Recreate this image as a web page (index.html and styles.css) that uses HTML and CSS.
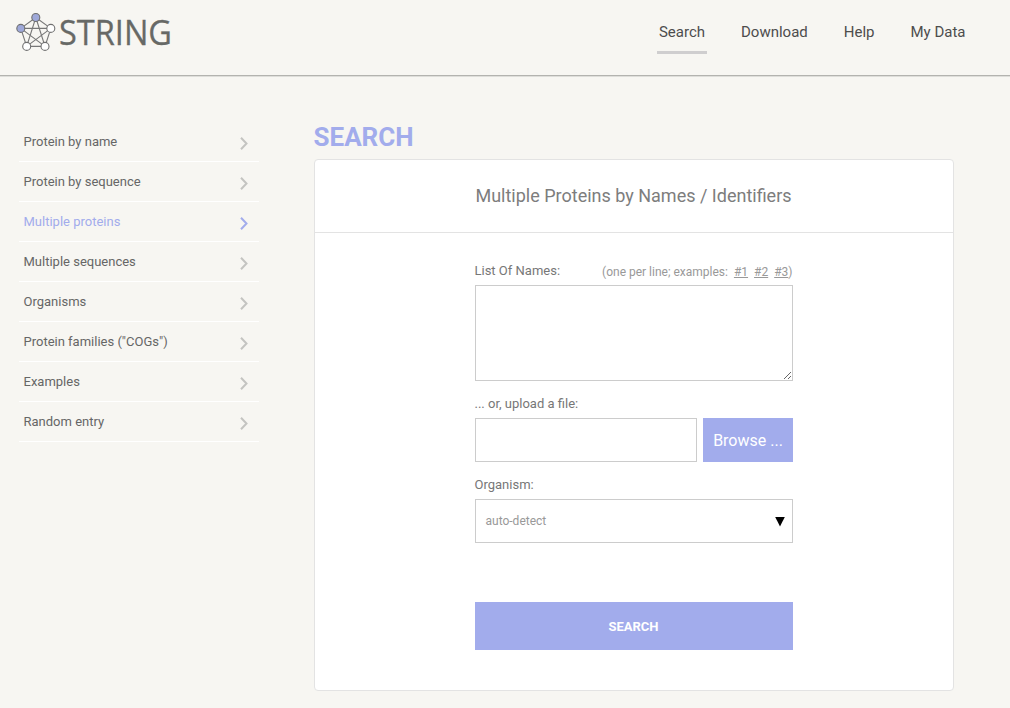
FILE: index.html
```html
<!DOCTYPE html>
<html lang="en">
<head>
<meta charset="utf-8">
<title>STRING: functional protein association networks</title>
<link rel="stylesheet" href="styles.css">
</head>
<body>
<header class="header">
  <svg class="logo" width="180" height="60" viewBox="12 8 180 60" role="img" aria-label="STRING">
    <g class="logo-edges">
      <path d="M35.8 17.5 50.8 28.4 45 46.4H26.7L20.8 28.4Z"/>
      <path d="M35.8 17.5 45 46.4 20.8 28.4H50.8L26.7 46.4Z"/>
    </g>
    <g class="logo-nodes">
      <circle class="filled" cx="35.8" cy="17.5" r="4"/>
      <circle class="filled" cx="20.8" cy="28.4" r="4"/>
      <circle cx="50.8" cy="28.4" r="4"/>
      <circle cx="45" cy="46.4" r="4"/>
      <circle cx="26.7" cy="46.4" r="4"/>
    </g>
    <text class="logo-text" x="59" y="45" textLength="113" lengthAdjust="spacingAndGlyphs">STRING</text>
  </svg>
  <nav class="nav">
    <a class="nav-item active">Search</a>
    <a class="nav-item">Download</a>
    <a class="nav-item">Help</a>
    <a class="nav-item">My Data</a>
  </nav>
</header>
<div class="page">
  <ul class="side">
    <li><span>Protein by name</span><svg class="chevron" viewBox="0 0 8 13"><path d="M1 .7 6.5 6.5 1 12.3"/></svg></li>
    <li><span>Protein by sequence</span><svg class="chevron" viewBox="0 0 8 13"><path d="M1 .7 6.5 6.5 1 12.3"/></svg></li>
    <li class="current"><span>Multiple proteins</span><svg class="chevron" viewBox="0 0 8 13"><path d="M1 .7 6.5 6.5 1 12.3"/></svg></li>
    <li><span>Multiple sequences</span><svg class="chevron" viewBox="0 0 8 13"><path d="M1 .7 6.5 6.5 1 12.3"/></svg></li>
    <li><span>Organisms</span><svg class="chevron" viewBox="0 0 8 13"><path d="M1 .7 6.5 6.5 1 12.3"/></svg></li>
    <li><span>Protein families ("COGs")</span><svg class="chevron" viewBox="0 0 8 13"><path d="M1 .7 6.5 6.5 1 12.3"/></svg></li>
    <li><span>Examples</span><svg class="chevron" viewBox="0 0 8 13"><path d="M1 .7 6.5 6.5 1 12.3"/></svg></li>
    <li><span>Random entry</span><svg class="chevron" viewBox="0 0 8 13"><path d="M1 .7 6.5 6.5 1 12.3"/></svg></li>
  </ul>
  <main class="main">
    <h1 class="title">SEARCH</h1>
    <section class="card">
      <h2 class="card-title">Multiple Proteins by Names / Identifiers</h2>
      <form class="form">
        <div class="label-row">
          <label class="label">List Of Names:</label>
          <span class="hint">(one per line; examples: <a>#1</a> <a>#2</a> <a>#3</a>)</span>
        </div>
        <textarea class="names"></textarea>
        <label class="label label-file">... or, upload a file:</label>
        <div class="file-row">
          <input class="file-name" type="text">
          <button class="browse" type="button">Browse ...</button>
        </div>
        <label class="label label-organism">Organism:</label>
        <div class="organism">
          <span>auto-detect</span>
          <svg class="caret" width="10" height="10" viewBox="0 0 10 10"><path d="M.2 0H9.8L5 9.6Z"/></svg>
        </div>
        <button class="submit" type="button">SEARCH</button>
      </form>
    </section>
  </main>
</div>
</body>
</html>
```

FILE: styles.css
```css
* { box-sizing: border-box; }
body {
  margin: 0;
  height: 708px;
  overflow: hidden;
  background: #f7f6f2;
  font-family: Roboto, "Liberation Sans", sans-serif;
  font-size: 13px;
  color: #666;
}
.header {
  height: 77px;
  padding: 8px 42.5px 0 12px;
  display: flex;
  justify-content: space-between;
  align-items: flex-start;
  border-bottom: 1px solid #dededa;
  box-shadow: inset 0 -1px #b3b3af;
}
.logo { display: block; overflow: visible; }
.logo-edges { fill: none; stroke: #777; stroke-width: 1.1; }
.logo-nodes { fill: #fff; stroke: #707070; stroke-width: 1.1; }
.logo-nodes .filled { fill: #9ea8d9; }
.logo-text {
  font: 35px "Open Sans", "Noto Sans", sans-serif;
  fill: #676966;
  stroke: #676966;
  stroke-width: 0.3;
}
.nav { display: flex; gap: 32px; }
.nav-item {
  height: 46px;
  padding: 0 2px;
  font-size: 15px;
  line-height: 48px;
  color: #4d4d4d;
}
.nav-item.active { border-bottom: 3px solid #cfcecf; }
.page { display: flex; padding-left: 19px; }
.side {
  width: 240px;
  margin: 45px 55px 0 0;
  padding: 0;
  list-style: none;
}
.side li {
  display: flex;
  justify-content: space-between;
  height: 40px;
  padding: 0 11.5px 0 4.5px;
  line-height: 39px;
  border-bottom: 1px solid #fff;
}
.side .current { color: #a2acec; }
.chevron {
  width: 8px;
  height: 13px;
  margin-top: 15px;
  fill: none;
  stroke: #c4c4c1;
  stroke-width: 2;
}
.current .chevron { stroke: #a2acec; }
.main { width: 640px; padding-top: 42px; }
.title {
  margin: 0 0 0 -0.5px;
  height: 40px;
  font-size: 26px;
  line-height: 36px;
  font-weight: 700;
  color: #a2acec;
}
.card {
  height: 532px;
  background: #fff;
  border: 1px solid #e3e3e3;
  border-radius: 4px;
}
.card-title {
  margin: 0;
  height: 73px;
  padding-right: 1px;
  line-height: 72px;
  font-size: 18px;
  font-weight: 400;
  text-align: center;
  color: #7d7d7d;
  border-bottom: 1px solid #e3e3e3;
}
.form { width: 318px; margin: 0 0 0 160px; display: flex; flex-direction: column; }
.label-row { height: 52px; padding-top: 28px; display: flex; justify-content: space-between; }
.label { height: 20px; line-height: 20px; color: #777; white-space: nowrap; text-indent: -0.5px; }
.hint { padding: 1px 0.5px 0 0; font-size: 12px; line-height: 20px; color: #999; white-space: nowrap; }
.hint a { margin-left: 3px; text-decoration: underline; }
.names, .file-name, .organism { background: #fff; border: 1px solid #ccc; border-radius: 0; }
.names { display: block; height: 96px; resize: vertical; outline: none; }
.label-file { margin: 13px 0 4px; }
.file-row { display: flex; justify-content: space-between; height: 44px; }
.file-name { width: 222px; }
.browse, .submit {
  padding: 0;
  border: 0;
  background: #a2acec;
  color: #fff;
  font-family: inherit;
}
.browse { width: 90px; font-size: 16px; }
.label-organism { margin: 13px 0 4px; }
.organism {
  display: flex;
  justify-content: space-between;
  align-items: center;
  height: 44px;
  padding: 0 7px 0 9.5px;
  font-size: 12px;
  color: #999;
}
.caret { margin-top: 2px; fill: #000; }
.submit { height: 48px; margin-top: 59px; padding-right: 1px; font-size: 13px; font-weight: 700; }
```
